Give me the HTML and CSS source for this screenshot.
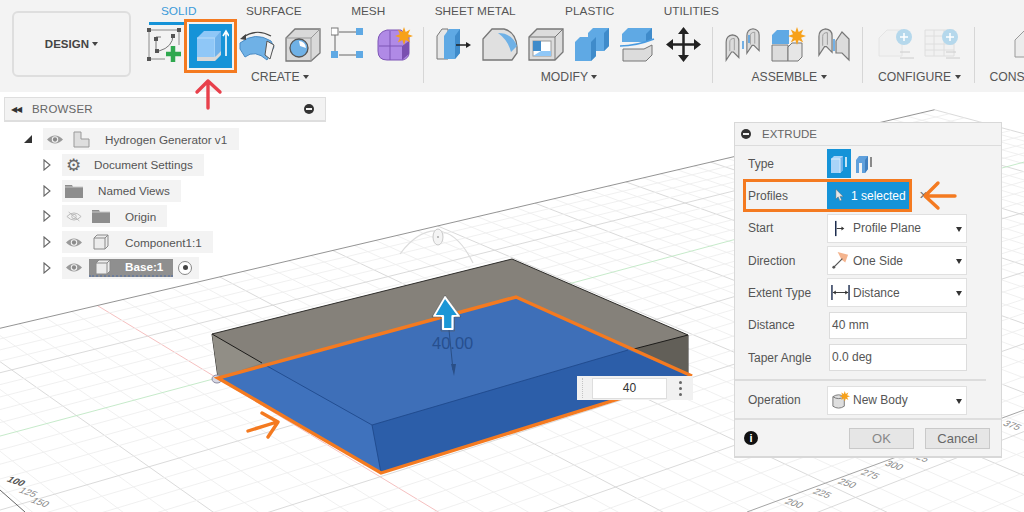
FILE: index.html
```html
<!DOCTYPE html>
<html lang="en">
<head>
  <meta charset="UTF-8" />
  <title>Extrude - Hydrogen Generator v1</title>
  <link rel="stylesheet" href="styles.css">
</head>
<body>

<svg class="defs" width="0" height="0">
  <symbol id="eye" viewBox="0 0 18 12">
    <path d="M0 6Q9 -3 18 6Q9 15 0 6Z" fill="#9a9a9a"/>
    <circle cx="9" cy="6" r="3.600" fill="#f3f3f3"/>
    <circle cx="9" cy="6" r="2.400" fill="#8a8a8a"/>
  </symbol>
  <symbol id="folder" viewBox="0 0 18 14">
    <path d="M0 1H7L8 3H18V14H0Z" fill="#8d8d8d"/>
    <path d="M0 3H18" stroke="#c9c9c9"/>
  </symbol>
  <symbol id="cube" viewBox="0 0 16 16">
    <path d="M1 4L4 1H15V12L12 15H1Z" fill="#ececec" stroke="#8a8a8a"/>
    <path d="M1 4H12V15M12 4L15 1" fill="none" stroke="#8a8a8a"/>
  </symbol>
  <symbol id="tri" viewBox="0 0 8 12">
    <path d="M1 1L7 6L1 11Z" fill="#fff" stroke="#666" stroke-width="1.100"/>
  </symbol>
  <symbol id="star" viewBox="0 0 16 16">
    <path d="M8 0L9.500 4.500L13.500 2.200L11.600 6.400L16 8L11.600 9.600L13.500 13.800L9.500 11.500L8 16L6.500 11.500L2.500 13.800L4.400 9.600L0 8L4.400 6.400L2.500 2.200L6.500 4.500Z" fill="#f7a11a"/>
  </symbol>
  <symbol id="joint" viewBox="0 0 16 32">
    <path d="M1 10Q1 3 8 2Q15 3 15 9V27L9 21H7L1 30Z" fill="#dcdcdc" stroke="#777" stroke-width="1.300"/>
    <path d="M5 20V10Q5 6 10 6V19" fill="none" stroke="#999"/>
  </symbol>
</svg>

<header class="toolbar">
  <button class="design-btn">DESIGN <span class="caret"></span></button>
  <div class="ribbon">
    <nav class="tabs">
      <span class="tab tab-active">SOLID</span>
      <span class="tab">SURFACE</span>
      <span class="tab">MESH</span>
      <span class="tab">SHEET METAL</span>
      <span class="tab">PLASTIC</span>
      <span class="tab">UTILITIES</span>
    </nav>
    <div class="groups">
      <section class="group group-create">
        <div class="icons">
          <svg class="tool" viewBox="0 0 36 36">
            <path d="M2 3H32M2 3V32M2 32H18M32 3V18" stroke="#8a8a8a" fill="none"/>
            <path d="M9 10V24H12M9 10H14M26 8Q26 20 12 24" stroke="#777" fill="none"/>
            <g fill="#555"><rect x="0" y="1" width="4" height="4"/><rect x="30" y="1" width="4" height="4"/><rect x="0" y="30" width="4" height="4"/><rect x="7" y="10" width="4" height="4"/><rect x="24" y="7" width="4" height="4"/><rect x="8" y="22" width="4" height="4"/></g>
            <path d="M26 19V35M19 27H34" stroke="#2fa84f" stroke-width="4.500"/>
          </svg>
          <div class="tool-on">
            <svg class="tool" viewBox="0 0 36 36">
              <path d="M4 11L11 4H28V24L22 30H4Z" fill="#8fc7f7"/>
              <path d="M4 11H22V30" fill="none" stroke="#b9dcf9"/>
              <path d="M22 11L28 4V24L22 30Z" fill="#6fb1ea"/>
              <path d="M4 30H22L28 24V28L22 34H4Z" fill="#d8d8d8"/>
              <path d="M33 29V6M30 9L33 4L36 9" stroke="#fff" stroke-width="1.600" fill="none"/>
            </svg>
          </div>
          <svg class="tool" viewBox="0 0 36 36">
            <path d="M1 16Q16 4 32 14L35 20L28 33Q16 22 6 30L1 22Z" fill="#6fb1e6" stroke="#4a8bc4"/>
            <path d="M28 14L35 18L31 32L26 28Z" fill="#f3f3f3" stroke="#555"/>
            <path d="M4 10Q18 1 32 9" fill="none" stroke="#444" stroke-width="1.200"/>
            <path d="M1 12L7 7L7 13Z" fill="#444"/>
          </svg>
          <svg class="tool" viewBox="0 0 36 36">
            <path d="M1 11L10 2H35V26L26 34H1Z" fill="#d9d9d9" stroke="#777" stroke-width="1.300"/>
            <path d="M1 11H26V34M26 11L35 2" fill="none" stroke="#999"/>
            <circle cx="14" cy="21" r="9" fill="#6fb1e6" stroke="#555" stroke-width="1.300"/>
            <path d="M14 14A7 7 0 0 1 21 21L15 19Z" fill="#fff"/>
          </svg>
          <svg class="tool" viewBox="0 0 36 36">
            <path d="M4 6V27M8 5H26M8 28H26" stroke="#666" fill="none"/>
            <rect x="0" y="1" width="7" height="7" fill="#fff" stroke="#777"/>
            <rect x="25" y="1" width="7" height="7" fill="#5fa9e4"/>
            <rect x="0" y="24" width="7" height="7" fill="#5fa9e4"/>
            <rect x="25" y="24" width="7" height="7" fill="#5fa9e4"/>
          </svg>
          <svg class="tool" viewBox="0 0 36 36">
            <path d="M1 14Q1 5 10 3H24L32 10V26Q32 31 26 33H10Q1 33 1 24Z" fill="#b08ae6" stroke="#7d55b5"/>
            <path d="M2 19H25M13 4V33" stroke="#7d55b5" fill="none"/>
            <path d="M25 19L32 14V27L25 33Z" fill="#7a50b0"/>
            <use href="#star" x="18" y="0" width="18" height="18"/>
          </svg>
        </div>
        <div class="group-label">CREATE <span class="caret"></span></div>
      </section>

      <section class="group group-modify">
        <div class="icons">
          <svg class="tool" viewBox="0 0 36 36">
            <path d="M1 9L6 2H12V32H1Z" fill="#e6e6e6" stroke="#777"/>
            <path d="M8 9L13 2H24V26L19 32H8Z" fill="#5fa9e4"/>
            <path d="M19 9L24 2V26L19 32Z" fill="#3f8bca"/>
            <path d="M20 18H31" stroke="#222" stroke-width="1.500"/>
            <path d="M30 15L35 18L30 21Z" fill="#222"/>
          </svg>
          <svg class="tool" viewBox="0 0 36 36">
            <path d="M1 12L10 2H22Q34 5 35 20V26L30 33H1Z" fill="#e0e0e0" stroke="#777" stroke-width="1.300"/>
            <path d="M16 6Q30 6 35 19L29 25Q26 13 16 6Z" fill="#6fb1e6"/>
          </svg>
          <svg class="tool" viewBox="0 0 36 36">
            <path d="M1 10L9 2H35V25L27 33H1Z" fill="#dcdcdc" stroke="#777" stroke-width="1.300"/>
            <path d="M1 10H27V33M27 10L35 2" fill="none" stroke="#777"/>
            <rect x="5" y="14" width="18" height="15" fill="#fff" stroke="#999"/>
            <path d="M5 14H13V24H5Z" fill="#3f8bca"/>
            <path d="M5 29L13 24H23V29Z" fill="#8fc7f7"/>
          </svg>
          <svg class="tool" viewBox="0 0 36 36">
            <path d="M14 6L19 1H35V19L30 24H14Z" fill="#5fa9e4"/>
            <path d="M30 6L35 1V19L30 24Z" fill="#3f8bca"/>
            <path d="M1 15L6 10H22V29L17 34H1Z" fill="#5fa9e4"/>
            <path d="M17 15L22 10V29L17 34Z" fill="#3f8bca"/>
          </svg>
          <svg class="tool" viewBox="0 0 36 36">
            <path d="M2 7L8 1H32V12L26 15H2Z" fill="#5fa9e4"/>
            <path d="M26 7L32 1V12L26 15Z" fill="#3f8bca"/>
            <path d="M0 19Q16 19 34 12" stroke="#4a9be0" stroke-width="1.500" fill="none"/>
            <path d="M3 22H24L32 18V28L26 34H3Z" fill="#dcdcdc" stroke="#777"/>
          </svg>
          <svg class="tool" viewBox="0 0 36 36">
            <path d="M17.500 3V32M3 17.500H32" stroke="#222" stroke-width="2.500"/>
            <path d="M17.500 0L23 7H12ZM17.500 35L12 28H23ZM0 17.500L7 12V23ZM35 17.500L28 23V12Z" fill="#222"/>
          </svg>
        </div>
        <div class="group-label">MODIFY <span class="caret"></span></div>
      </section>

      <section class="group group-assemble">
        <div class="icons">
          <svg class="tool" viewBox="0 0 36 36">
            <use href="#joint" x="0" y="6" width="15" height="29"/>
            <use href="#joint" x="21" y="0" width="14" height="28"/>
            <path d="M18 14V22M24 8V16" stroke="#4a9be0" stroke-width="1.500"/>
          </svg>
          <svg class="tool" viewBox="0 0 36 36">
            <path d="M1 8L6 3H18V17H1Z" fill="#5fa9e4"/>
            <path d="M1 18H17V34H1Z" fill="#dcdcdc" stroke="#777"/>
            <path d="M17 20L21 16H31V30L27 34H17Z" fill="#e6e6e6" stroke="#777"/>
            <use href="#star" x="17" y="0" width="18" height="18"/>
          </svg>
          <svg class="tool" viewBox="0 0 36 36">
            <use href="#joint" x="1" y="0" width="15" height="30"/>
            <path d="M19 14L25 5L32 12V33L25 26L19 26Z" fill="#dcdcdc" stroke="#777" stroke-width="1.200"/>
            <path d="M17 12V24" stroke="#4a9be0" stroke-width="1.500"/>
          </svg>
        </div>
        <div class="group-label">ASSEMBLE <span class="caret"></span></div>
      </section>

      <section class="group group-config">
        <div class="icons">
          <svg class="tool" viewBox="0 0 36 36">
            <path d="M1 11L9 3H24V29H1Z" fill="#f1f1f1" stroke="#e4e4e4"/>
            <path d="M22 25H32M22 31H36" stroke="#ccc"/>
            <circle cx="26" cy="10" r="8" fill="#b5d8ec"/>
            <path d="M26 6V14M22 10H30" stroke="#fff" stroke-width="1.500"/>
          </svg>
          <svg class="tool" viewBox="0 0 36 36">
            <path d="M1 3H30V29H1ZM1 9H30M1 17H30M1 23H30M10 3V29M20 3V29" fill="#f1f1f1" stroke="#dedede"/>
            <path d="M22 25H32M22 31H36" stroke="#ccc"/>
            <circle cx="26" cy="10" r="8" fill="#b5d8ec"/>
            <path d="M26 6V14M22 10H30" stroke="#fff" stroke-width="1.500"/>
          </svg>
        </div>
        <div class="group-label">CONFIGURE <span class="caret"></span></div>
      </section>

      <section class="group group-last">
        <div class="icons">
          <svg class="tool tool-cut" viewBox="0 0 36 36">
            <path d="M1 13L11 3H36V30H1Z" fill="#ececec" stroke="#999"/>
          </svg>
        </div>
        <div class="group-label">CONS</div>
      </section>
    </div>
  </div>
</header>

<!-- viewport: grid, body and manipulators, all on screen coordinates -->
<svg class="scene" viewBox="0 0 1024 512">
  <g id="grid"></g>
  <path d="M747 512L1024 410" stroke="#a5a5a5" fill="none"/>
  <path d="M0 490L25 512" stroke="#666" fill="none"/>
  <g class="axis-labels">
    <text transform="matrix(.95 .32 -.7 .7 6 481)" class="axis-strong">100</text>
    <text transform="matrix(.95 .32 -.7 .7 18 492)">125</text>
    <text transform="matrix(.95 .32 -.7 .7 30 502)">150</text>
    <text transform="matrix(.95 .32 -.7 .7 784 503)">200</text>
    <text transform="matrix(.95 .32 -.7 .7 812 493)">225</text>
    <text transform="matrix(.95 .32 -.7 .7 837 483)">250</text>
    <text transform="matrix(.95 .32 -.7 .7 860 474)">275</text>
    <text transform="matrix(.95 .32 -.7 .7 884 465)">300</text>
    <text transform="matrix(.95 .32 -.7 .7 910 457)">325</text>
    <text transform="matrix(.95 .32 -.7 .7 1002 425)">375</text>
  </g>

  <path d="M400 254Q418 230 437 231Q458 232 473 263" fill="none" stroke="#dcdcdc" stroke-width="1.200"/>
  <ellipse cx="438" cy="237" rx="5" ry="8" fill="#f4f4f4" stroke="#c9c9c9"/>
  <circle cx="438" cy="237" r="1" fill="#aaa"/>

  <path d="M212 334L512 259L688 335V378L516 297L218 378Z" fill="#85817a" stroke="#2e2d2a"/>
  <path d="M212 334L262 363L218 378Z" fill="#918e86"/>
  <path d="M630 350L688 335V378Z" fill="#625f58"/>
  <path d="M212 334L262 363M630 350L688 335" stroke="#1d1c1a" fill="none"/>
  <ellipse cx="217" cy="379" rx="5" ry="4" fill="#d8d8e4" stroke="#8a8aa0"/>

  <path d="M218 378L516 297L692 376L381 473Z" fill="#3e6fb8"/>
  <path d="M218 378L267 366L372 425L381 473Z" fill="#3f72bd"/>
  <path d="M372 425L628 350L692 376L381 473Z" fill="#2c5ea9"/>
  <path d="M267 366L372 425L628 350M372 425L381 473" fill="none" stroke="#1f4a8c" stroke-width=".9"/>

  <path d="M692 376L516 297L218 378L381 473L692 376" fill="none" stroke="#f47a20" stroke-width="3.400"/>

  <text x="432" y="349" class="dim-text">40.00</text>
  <path d="M449 330L453 370" stroke="#2a4f86" fill="none"/>
  <path d="M451 364L456 364L454 376Z" fill="#2a4f86"/>
  <path d="M445 297L459 316H452.500V329H443V316H434Z" fill="#1b96d6" stroke="#fff" stroke-width="2.200" stroke-linejoin="round"/>
  <path d="M445 295L461 317H454.500V331H441V317H432Z" fill="none" stroke="#555" stroke-width=".5"/>

  <path d="M248 431L277 422M262 413L278 422L268 437" fill="none" stroke="#f47a20" stroke-width="3.400" stroke-linecap="round" stroke-linejoin="round"/>
</svg>

<aside class="browser">
  <div class="browser-head">
    <span class="rewind">&#9664;&#9664;</span>
    <span class="browser-title">BROWSER</span>
    <span class="minus"></span>
  </div>
  <ul class="tree">
    <li class="tree-row tree-root">
      <svg class="tri-open" viewBox="0 0 8 8"><path d="M8 0V8H0Z" fill="#333"/></svg>
      <div class="chip chip-root">
        <svg class="ic-eye"><use href="#eye"/></svg>
        <svg class="ic-part" viewBox="0 0 17 17"><path d="M1 1H8V8H16V16H1Z" fill="#dedede" stroke="#999"/></svg>
        <span class="name">Hydrogen Generator v1</span>
      </div>
    </li>
    <li class="tree-row">
      <svg class="tri"><use href="#tri"/></svg>
      <div class="chip">
        <span class="gear">&#9881;</span>
        <span class="name name-gear">Document Settings</span>
      </div>
    </li>
    <li class="tree-row">
      <svg class="tri"><use href="#tri"/></svg>
      <div class="chip">
        <svg class="ic-folder"><use href="#folder"/></svg>
        <span class="name name-views">Named Views</span>
      </div>
    </li>
    <li class="tree-row">
      <svg class="tri"><use href="#tri"/></svg>
      <div class="chip">
        <svg class="ic-eye" viewBox="0 0 18 12"><path d="M1 6Q9 -2 17 6Q9 14 1 6Z" fill="none" stroke="#b5b5b5"/><circle cx="9" cy="6" r="2.500" fill="none" stroke="#b5b5b5"/><path d="M3 1L15 11" stroke="#b5b5b5"/></svg>
        <svg class="ic-folder"><use href="#folder"/></svg>
        <span class="name">Origin</span>
      </div>
    </li>
    <li class="tree-row">
      <svg class="tri"><use href="#tri"/></svg>
      <div class="chip">
        <svg class="ic-eye"><use href="#eye"/></svg>
        <svg class="ic-cube"><use href="#cube"/></svg>
        <span class="name">Component1:1</span>
      </div>
    </li>
    <li class="tree-row">
      <svg class="tri"><use href="#tri"/></svg>
      <div class="chip chip-base">
        <svg class="ic-eye"><use href="#eye"/></svg>
        <div class="base-tag">
          <svg class="ic-cube"><use href="#cube"/></svg>
          <span class="name-base">Base:1</span>
        </div>
        <span class="radio"></span>
      </div>
    </li>
  </ul>
</aside>

<div class="value-box">
  <span class="grip"></span>
  <span class="value-input">40</span>
  <span class="dots"><i></i><i></i><i></i></span>
</div>

<aside class="panel">
  <div class="panel-head">
    <span class="minus"></span>
    <span class="panel-title">EXTRUDE</span>
  </div>
  <div class="panel-body">
    <div class="row row-type">
      <label>Type</label>
      <span class="type-btn type-on">
        <svg viewBox="0 0 18 20" width="18" height="20"><path d="M1 5L4 2H13V16L10 19H1Z" fill="#a9d4f8"/><path d="M10 5L13 2V16L10 19Z" fill="#6fb1ea"/><path d="M1 5H10V19" fill="none" stroke="#d5ebfc"/><path d="M16 3V13" stroke="#fff" stroke-width="1.500"/></svg>
      </span>
      <span class="type-btn">
        <svg viewBox="0 0 18 20" width="18" height="20"><path d="M1 6L4 2H13V15L10 19H7V9H4V19H1Z" fill="#5fa0dc"/><path d="M10 6L13 2V15L10 19Z" fill="#3f7fbf"/><path d="M16 3V13" stroke="#444" stroke-width="1.200"/></svg>
      </span>
    </div>
    <div class="row row-profiles">
      <label>Profiles</label>
      <span class="selected">
        <svg viewBox="0 0 10 14" width="9" height="13"><path d="M1 0V11L3.500 8.500L5.500 13L7.500 12L5.500 8H9Z" fill="#e8e8e8" stroke="#666" stroke-width=".5"/></svg>
        1 selected
      </span>
      <span class="clear-x">&#10005;</span>
    </div>
    <div class="row">
      <label>Start</label>
      <div class="select">
        <svg class="opt-ic" viewBox="0 0 20 20"><path d="M5 2V18" stroke="#1d2d4f" stroke-width="1.600"/><path d="M6 10H12" stroke="#333"/><path d="M11 8L14 10L11 12Z" fill="#333"/></svg>
        Profile Plane<span class="select-arrow"></span>
      </div>
    </div>
    <div class="row">
      <label>Direction</label>
      <div class="select">
        <svg class="opt-ic" viewBox="0 0 20 20"><path d="M7 1L18 4L15 12L11 9Z" fill="#f4b48e"/><path d="M2 18L12 8" stroke="#555" stroke-width="1.300"/><circle cx="3" cy="17" r="1.500" fill="#555"/></svg>
        One Side<span class="select-arrow"></span>
      </div>
    </div>
    <div class="row">
      <label>Extent Type</label>
      <div class="select">
        <svg class="opt-ic" viewBox="0 0 20 20"><path d="M1 2V18M19 2V18" stroke="#1d2d4f" stroke-width="1.500"/><path d="M2 10H18" stroke="#333"/><path d="M2 10L5 8V12ZM18 10L15 8V12Z" fill="#333"/></svg>
        Distance<span class="select-arrow"></span>
      </div>
    </div>
    <div class="row">
      <label>Distance</label>
      <div class="text-field">40 mm</div>
    </div>
    <div class="row">
      <label>Taper Angle</label>
      <div class="text-field">0.0 deg</div>
    </div>
    <hr class="divider">
    <div class="row">
      <label>Operation</label>
      <div class="select">
        <svg class="opt-ic" viewBox="0 0 20 20"><path d="M2 6Q8 2 14 6V16Q8 20 2 16Z" fill="#dedede" stroke="#777"/><path d="M2 6Q8 10 14 6" fill="none" stroke="#777"/><use href="#star" x="9" y="0" width="11" height="11"/></svg>
        New Body<span class="select-arrow"></span>
      </div>
    </div>
  </div>
  <div class="panel-foot">
    <span class="info">i</span>
    <button class="btn btn-ok">OK</button>
    <button class="btn">Cancel</button>
  </div>
</aside>

<!-- tutorial arrows lie over the panels -->
<svg class="marks" viewBox="0 0 1024 512">
  <path d="M208 108V81M197 92L208 81L220 92" fill="none" stroke="#e8404b" stroke-width="3.400" stroke-linecap="round" stroke-linejoin="round"/>
  <path d="M955 196H926M938 183L925 196L938 208" fill="none" stroke="#f47a20" stroke-width="3.400" stroke-linecap="round" stroke-linejoin="round"/>
</svg>

<script src="grid.js"></script>
</body>
</html>
```

FILE: styles.css
```css
*, *::before, *::after {
  box-sizing: border-box;
}
html, body {
  margin: 0;
  width: 1024px;
  height: 512px;
  overflow: hidden;
  background-color: #fff;
  font-family: 'Liberation Sans', Arial, sans-serif;
  color: #555;
}
.defs {
  position: absolute;
}
.scene, .marks {
  position: absolute;
  top: 0;
  left: 0;
  width: 1024px;
  height: 512px;
}
.axis-labels text {
  font-size: 10px;
  fill: #8a8a8a;
}
.axis-labels .axis-strong {
  fill: #555;
  font-weight: bold;
}
.dim-text {
  font-size: 16.500px;
  fill: #274f8f;
}

/* toolbar */
.toolbar {
  display: flex;
  width: 1024px;
  height: 92px;
  padding: 11px 0 0 12px;
  background-color: #f3f3f3;
  overflow: hidden;
}
.design-btn {
  flex: none;
  width: 119px;
  height: 66px;
  background-color: #f3f3f3;
  border: 2px solid #dedede;
  border-radius: 6px;
  font-family: inherit;
  font-size: 11.500px;
  font-weight: bold;
  color: #444;
}
.caret {
  display: inline-block;
  border-left: 3.500px solid transparent;
  border-right: 3.500px solid transparent;
  border-top: 4px solid #444;
  vertical-align: 2px;
}
.ribbon {
  flex: none;
  margin-left: 16px;
  margin-top: -11px;
}
.tabs {
  position: relative;
  display: flex;
  gap: 49.500px;
  height: 27px;
  padding: 4px 0 0 14px;
  font-size: 11.800px;
  white-space: nowrap;
}
.tab-active {
  color: #3a9ad9;
}
.tab-active::after {
  content: "";
  position: absolute;
  left: 2px;
  top: 22px;
  width: 61px;
  height: 3px;
  background-color: #1593d8;
}
.groups {
  display: flex;
  height: 56px;
}
.group {
  display: flex;
  flex-direction: column;
  align-items: center;
  flex: none;
  padding-right: 10px;
  border-right: 1px solid #d6d6d6;
}
.group-modify, .group-assemble {
  padding-left: 12px;
}
.group-assemble {
  padding-right: 9px;
}
.group-config {
  padding: 0 13px 0 15px;
}
.group-last {
  padding-left: 15px;
  border-right: none;
  align-items: flex-start;
}
.icons {
  display: flex;
  gap: 10px;
  height: 36px;
}
.tool {
  display: block;
  width: 36px;
  height: 36px;
  flex: none;
}
.tool-cut {
  margin-left: 24px;
}
.tool-on {
  position: relative;
  width: 36px;
  height: 36px;
  flex: none;
}
.tool-on::before {
  content: "";
  position: absolute;
  left: -9px;
  top: -8px;
  width: 53px;
  height: 54px;
  background-color: #1593d8;
  border: 3px solid #f47a20;
  box-shadow: inset 0 0 0 2px #f3f3f3;
}
.tool-on .tool {
  position: relative;
}
.group-label {
  margin-top: 7px;
  font-size: 12.200px;
  white-space: nowrap;
}

/* browser */
.browser {
  position: absolute;
  left: 4px;
  top: 97px;
  width: 322px;
}
.browser-head {
  display: flex;
  align-items: center;
  height: 25px;
  padding: 0 11px 0 6px;
  background-color: #f3f3f3;
  border: 1px solid #dedede;
  border-bottom-width: 2px;
  font-size: 11.500px;
}
.rewind {
  font-size: 8px;
  letter-spacing: -1px;
  color: #333;
}
.browser-title {
  flex: 1;
  margin-left: 11px;
  letter-spacing: .2px;
  color: #666;
}
.minus {
  position: relative;
  display: block;
  width: 10px;
  height: 10px;
  border-radius: 50%;
  background-color: #333;
}
.minus::after {
  content: "";
  position: absolute;
  left: 2px;
  top: 4px;
  width: 6px;
  height: 2px;
  background-color: #f3f3f3;
}
.tree {
  list-style: none;
  margin: 6px 0 0;
  padding: 0;
  font-size: 11.700px;
}
.tree-row {
  display: flex;
  align-items: center;
  height: 22px;
  margin-bottom: 3.800px;
  padding-left: 39px;
}
.tree-root {
  padding-left: 20px;
}
.tri-open {
  width: 8px;
  height: 8px;
  margin-right: 11px;
}
.tri {
  width: 8px;
  height: 12px;
  margin-right: 11px;
}
.chip {
  display: flex;
  align-items: center;
  height: 22px;
  padding: 0 11px 0 4px;
  background-color: #f3f3f3;
}
.chip-root {
  padding: 0 12px 0 4px;
}
.chip-base {
  padding-right: 7px;
}
.ic-eye {
  width: 16px;
  height: 11px;
  flex: none;
}
.ic-part {
  width: 17px;
  height: 17px;
  margin: 0 15px 0 10px;
  flex: none;
}
.ic-folder {
  width: 18px;
  height: 14px;
  margin: 0 15px 0 10px;
  flex: none;
}
.chip > .ic-folder:first-child {
  margin: 0 15px 0 -1px;
}
.ic-cube {
  width: 16px;
  height: 16px;
  margin: 0 16px 0 11px;
  flex: none;
}
.gear {
  width: 14px;
  margin-right: 14px;
  font-family: 'DejaVu Sans', sans-serif;
  font-size: 17px;
  line-height: 22px;
  color: #666;
}
.name {
  white-space: nowrap;
}
.base-tag {
  display: flex;
  align-items: center;
  width: 84px;
  height: 18px;
  margin-left: 7px;
  background-color: #8f8f8f;
  border-bottom: 2px dotted #6d7d9a;
}
.base-tag .ic-cube {
  margin: 0 14px 0 6px;
}
.name-base {
  font-weight: bold;
  color: #fff;
}
.radio {
  position: relative;
  width: 14px;
  height: 14px;
  margin-left: 5px;
  border: 1px solid #888;
  border-radius: 50%;
  background-color: #fff;
}
.radio::after {
  content: "";
  position: absolute;
  left: 3.500px;
  top: 3.500px;
  width: 5px;
  height: 5px;
  border-radius: 50%;
  background-color: #444;
}

/* floating value box */
.value-box {
  position: absolute;
  left: 577px;
  top: 376px;
  display: flex;
  align-items: center;
  width: 116px;
  height: 24px;
  padding-left: 15px;
  background-color: #f1f1f1;
}
.grip {
  position: absolute;
  left: 5px;
  top: 2px;
  height: 20px;
  border-left: 1px dotted #c4c4c4;
}
.value-input {
  width: 75px;
  height: 21px;
  background-color: #fff;
  border: 1px solid #dedede;
  font-size: 12px;
  line-height: 19px;
  text-align: center;
  color: #333;
}
.dots {
  display: flex;
  flex-direction: column;
  gap: 3px;
  margin-left: 12px;
}
.dots i {
  display: block;
  width: 3px;
  height: 3px;
  border-radius: 50%;
  background-color: #666;
}

/* extrude panel */
.panel {
  position: absolute;
  left: 734px;
  top: 122px;
  width: 268px;
  height: 336px;
  background-color: #f3f3f3;
  border: 1px solid #d8d8d8;
  border-bottom-width: 2px;
  font-size: 12px;
}
.panel-head {
  display: flex;
  align-items: center;
  height: 23px;
  padding-left: 6px;
  border-bottom: 1px solid #dcdcdc;
}
.panel-title {
  margin-left: 11px;
  font-size: 11.500px;
  color: #666;
}
.panel-body {
  padding: 3px 34px 0 13px;
  height: 272px;
}
.row {
  display: flex;
  align-items: center;
  height: 32.400px;
}
.row label {
  flex: none;
  width: 79px;
}
.row-type {
  height: 29px;
}
.type-btn {
  display: flex;
  align-items: center;
  justify-content: center;
  width: 24px;
  height: 29px;
  margin-right: 1px;
}
.type-on {
  background-color: #1593d8;
}
.row-profiles {
  position: relative;
  height: 33px;
  margin-top: 1px;
}
.row-profiles::before {
  content: "";
  position: absolute;
  left: -5px;
  top: 0;
  width: 169px;
  height: 33px;
  border: 3px solid #f47a20;
}
.selected {
  display: flex;
  align-items: center;
  gap: 7px;
  width: 82px;
  height: 29px;
  padding-left: 8px;
  background-color: #1593d8;
  color: #fff;
}
.clear-x {
  margin-left: 10px;
  font-size: 11px;
  color: #666;
}
.select {
  position: relative;
  display: flex;
  align-items: center;
  width: 140px;
  height: 29px;
  padding-left: 3px;
  background-color: #fff;
  border: 1px solid #e0e0e0;
}
.opt-ic {
  width: 19px;
  height: 19px;
  margin-right: 3px;
  flex: none;
}
.select-arrow {
  position: absolute;
  right: 4px;
  top: 12px;
  border-left: 3.500px solid transparent;
  border-right: 3.500px solid transparent;
  border-top: 5px solid #333;
}
.text-field {
  width: 138px;
  height: 27px;
  margin-left: 2px;
  padding-left: 2px;
  background-color: #fff;
  border: 1px solid #dcdcdc;
  line-height: 25px;
}
.divider {
  margin: 5px -19px 3px -13px;
  border: none;
  border-top: 2px solid #dcdcdc;
}
.panel-foot {
  display: flex;
  align-items: center;
  height: 38px;
  padding: 0 11px 0 9px;
  border-top: 2px solid #dedede;
}
.info {
  width: 14px;
  height: 14px;
  border-radius: 50%;
  background-color: #111;
  color: #fff;
  font-size: 11px;
  font-weight: bold;
  line-height: 14px;
  text-align: center;
}
.btn {
  width: 65px;
  height: 21px;
  margin-left: 11px;
  padding: 0;
  background-color: #e6e6e6;
  border: 1px solid #c9c9c9;
  font-family: inherit;
  font-size: 13px;
  color: #666;
}
.btn-ok {
  margin-left: auto;
  color: #888;
}
```

FILE: grid.js
```js
// ground grid, projected from the two vanishing points of the view
const O = [217, 378];
const VA = [3200, -420];
const VB = [-1150, -450];
const SA = 0.045;
const SB = 0.0533;

function project(u, v) {
  const w = 1 + u * SA + v * SB;
  return [
    (O[0] + u * SA * VA[0] + v * SB * VB[0]) / w,
    (O[1] + u * SA * VA[1] + v * SB * VB[1]) / w
  ];
}

function addLine(a, b, color, width) {
  const line = document.createElementNS("http://www.w3.org/2000/svg", "line");
  line.setAttribute("x1", a[0]);
  line.setAttribute("y1", a[1]);
  line.setAttribute("x2", b[0]);
  line.setAttribute("y2", b[1]);
  line.setAttribute("stroke", color);
  line.setAttribute("stroke-width", width);
  document.getElementById("grid").appendChild(line);
}

const U_MIN = -3, U_MAX = 9, V_MIN = -7, V_MAX = 1.8;

// lines running towards VB, then towards VA; every fifth one is a major line
for (let i = U_MIN * 5; i <= U_MAX * 5; i++) {
  const u = i / 5;
  let color = i % 5 === 0 ? "#d6d6d6" : "#eeeeee";
  if (i === 0) color = "#f4b9b9";
  addLine(project(u, V_MIN), project(u, V_MAX), color, 0.9);
}
for (let i = Math.ceil(V_MIN * 5); i <= V_MAX * 5; i++) {
  const v = i / 5;
  let color = i % 5 === 0 ? "#d6d6d6" : "#eeeeee";
  if (i === 0) color = "#bfe8c4";
  if (i === V_MAX * 5) color = "#888888";
  addLine(project(U_MIN, v), project(U_MAX, v), color, 0.9);
}
```
